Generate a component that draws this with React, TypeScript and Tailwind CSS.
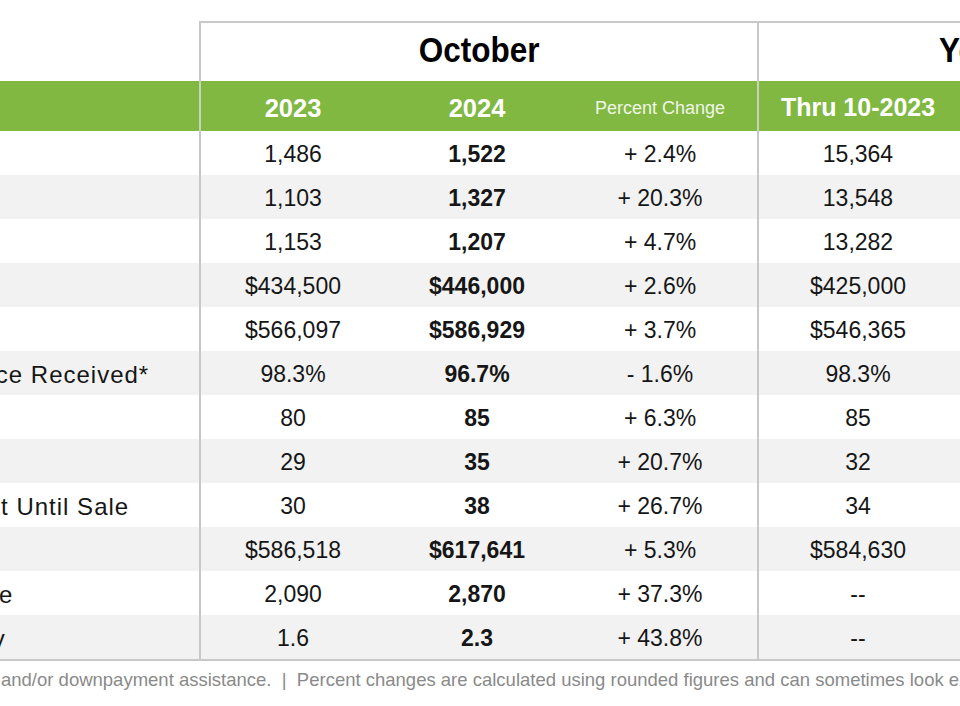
import React from "react";

type Row = {
  label: string;
  a: string;
  b: string;
  pct: string;
  ytd: string;
};

const rows: Row[] = [
  { label: "New Listings", a: "1,486", b: "1,522", pct: "+ 2.4%", ytd: "15,364" },
  { label: "Pending Sales", a: "1,103", b: "1,327", pct: "+ 20.3%", ytd: "13,548" },
  { label: "Closed Sales", a: "1,153", b: "1,207", pct: "+ 4.7%", ytd: "13,282" },
  { label: "Median Sales Price", a: "$434,500", b: "$446,000", pct: "+ 2.6%", ytd: "$425,000" },
  { label: "Average Sales Price", a: "$566,097", b: "$586,929", pct: "+ 3.7%", ytd: "$546,365" },
  { label: "Percent of Original List Price Received*", a: "98.3%", b: "96.7%", pct: "- 1.6%", ytd: "98.3%" },
  { label: "Housing Affordability Index", a: "80", b: "85", pct: "+ 6.3%", ytd: "85" },
  { label: "Days on Market Until Sale", a: "29", b: "35", pct: "+ 20.7%", ytd: "32" },
  { label: "Cumulative Days on Market Until Sale", a: "30", b: "38", pct: "+ 26.7%", ytd: "34" },
  { label: "Average List Price", a: "$586,518", b: "$617,641", pct: "+ 5.3%", ytd: "$584,630" },
  { label: "Inventory of Homes for Sale", a: "2,090", b: "2,870", pct: "+ 37.3%", ytd: "--" },
  { label: "Months Supply of Inventory", a: "1.6", b: "2.3", pct: "+ 43.8%", ytd: "--" },
];

const body = "font-['Liberation_Sans','Helvetica_Neue',Arial,sans-serif]";

function SectionTitle({ children }: { children: React.ReactNode }) {
  return (
    <span className="inline-block scale-x-[0.9] font-bold text-[35px] leading-none text-black whitespace-nowrap">
      {children}
    </span>
  );
}

export default function App() {
  return (
    <div className={`w-[960px] h-[706px] overflow-hidden bg-white ${body} text-[#161616]`}>
      <div className="-ml-[323px] w-[1700px] pt-[21px]">
        {/* Section header row */}
        <div className="flex h-[60px]">
          <div className="w-[522px] shrink-0" />
          <div className="w-[558px] shrink-0 border-l-2 border-t-2 border-[#c8c8c8] flex items-center justify-center pb-[5px]">
            <SectionTitle>October</SectionTitle>
          </div>
          <div className="w-[544px] shrink-0 border-l-2 border-t-2 border-[#c8c8c8] flex items-center justify-center pb-[5px]">
            <SectionTitle>Year to Date</SectionTitle>
          </div>
        </div>

        {/* Green column header row */}
        <div className="flex h-[50px] bg-[#80b842] text-white">
          <div className="w-[522px] shrink-0" />
          <div className="w-[186px] shrink-0 border-l-2 border-[#c9d2bd] flex items-center justify-center pt-[4px] font-bold text-[25.5px]">
            2023
          </div>
          <div className="w-[184px] shrink-0 flex items-center justify-center pt-[4px] font-bold text-[25.5px]">
            2024
          </div>
          <div className="w-[188px] shrink-0 pr-[6px] flex items-center justify-center pt-[4px] text-[18px] text-[#f0f6e6]">
            Percent Change
          </div>
          <div className="w-[200px] shrink-0 border-l-2 border-[#c9d2bd] flex items-center justify-center pt-[4px] font-bold text-[25px]">
            Thru 10-2023
          </div>
          <div className="w-[198px] shrink-0 flex items-center justify-center pt-[4px] font-bold text-[25px]">
            Thru 10-2024
          </div>
          <div className="w-[146px] shrink-0 flex items-center justify-center pt-[4px] text-[18px] text-[#f0f6e6]">
            Percent Change
          </div>
        </div>

        {/* Data rows */}
        {rows.map((r, i) => (
          <div
            key={r.label}
            className={`flex h-[44px] text-[23px] ${i % 2 === 1 ? "bg-[#f2f2f2]" : "bg-white"}`}
          >
            <div className="w-[522px] shrink-0 pl-[12px] pt-[3px] flex items-center whitespace-nowrap text-[24px] tracking-[1px]">
              {r.label}
            </div>
            <div className="w-[186px] shrink-0 border-l-2 border-[#c8c8c8] pt-[3px] flex items-center justify-center">
              {r.a}
            </div>
            <div className="w-[184px] shrink-0 pt-[3px] flex items-center justify-center font-bold">
              {r.b}
            </div>
            <div className="w-[188px] shrink-0 pr-[6px] pt-[3px] flex items-center justify-center">
              {r.pct}
            </div>
            <div className="w-[200px] shrink-0 border-l-2 border-[#c8c8c8] pt-[3px] flex items-center justify-center">
              {r.ytd}
            </div>
            <div className="w-[198px] shrink-0" />
            <div className="w-[146px] shrink-0" />
          </div>
        ))}

        {/* Bottom rule */}
        <div className="h-[2px] w-[1624px] bg-[#c8c8c8]" />

        {/* Footnote */}
        <div className="flex h-[36px] pt-[2px] items-center whitespace-nowrap text-[18.5px] text-[#8a8a8a]">
          <div className="w-[320px] shrink-0 flex justify-end">
            <span className="shrink-0">* Does not account for sale concessions</span>
          </div>
          <span className="ml-[4px] shrink-0">
            and/or downpayment assistance.{"\u00a0\u00a0"}|{"\u00a0\u00a0"}Percent changes are calculated using rounded figures and can sometimes look extreme due to small sample size.
          </span>
        </div>
      </div>
    </div>
  );
}
